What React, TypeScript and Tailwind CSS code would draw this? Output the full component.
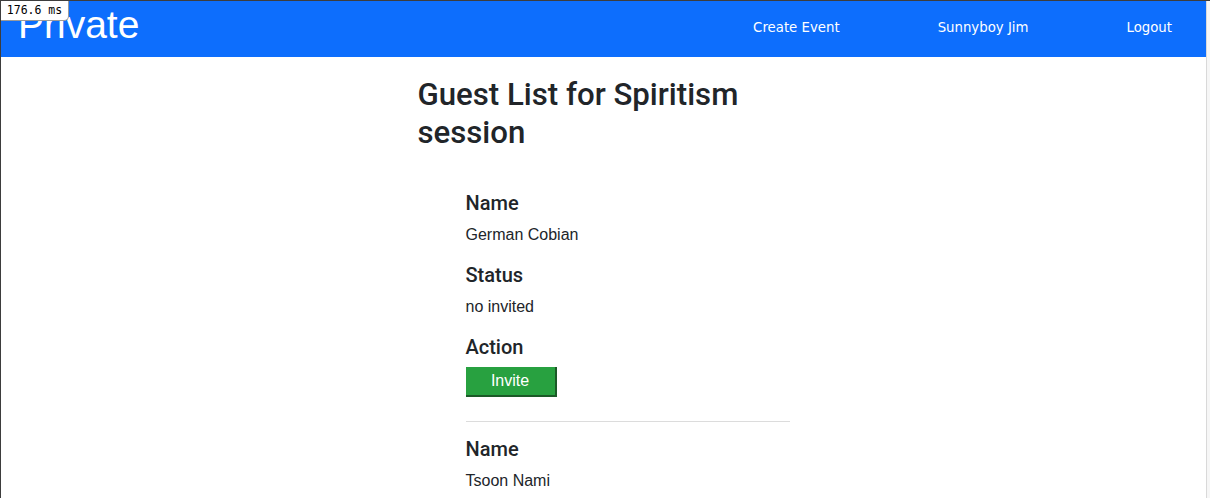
const guests = [
  { name: "German Cobian", status: "no invited" },
  { name: "Tsoon Nami", status: "no invited" },
];

function GuestItem({ name, status, last }: { name: string; status: string; last?: boolean }) {
  return (
    <div>
      <h5 className="text-[20px] leading-[24px] font-medium mb-2 font-['Roboto',sans-serif]">Name</h5>
      <p className="text-[16px] leading-[24px] mb-4">{name}</p>
      <h5 className="text-[20px] leading-[24px] font-medium mb-2 font-['Roboto',sans-serif]">Status</h5>
      <p className="text-[16px] leading-[24px] mb-4">{status}</p>
      <h5 className="text-[20px] leading-[24px] font-medium mb-2 font-['Roboto',sans-serif]">Action</h5>
      <button className="w-[91px] h-[30px] bg-[#28a140] text-white text-[16px] leading-none border-r-2 border-b-2 border-[#1b5a27]">
        Invite
      </button>
      {!last && <hr className="mt-[24px] mb-[15px] border-t border-[#dcdcdc]" />}
    </div>
  );
}

export default function App() {
  return (
    <div className="relative flex h-[498px] overflow-hidden bg-white border-t border-l border-[#3d3d3d] text-[#212529] font-['Liberation_Sans',sans-serif]">
      <div className="absolute top-0 left-0 z-10 w-[68px] h-[20px] bg-white border-r border-b border-[#9a9a9a] rounded-br-[5px] flex items-center justify-center font-['DejaVu_Sans_Mono',monospace] text-[11.5px] text-black">
        176.6 ms
      </div>

      <div className="flex-1 flex flex-col min-w-0">
        <nav className="shrink-0 h-[56px] bg-[#0d6efd] flex items-center">
          <span className="ml-[17px] text-[39px] leading-none text-white font-['Liberation_Sans',sans-serif] mb-[10px]">
            Private
          </span>
          <div className="ml-auto mb-[2px] flex items-center text-white text-[13.3px] font-['DejaVu_Sans',sans-serif]">
            <a className="mr-[98px]">Create Event</a>
            <a className="mr-[98px]">Sunnyboy Jim</a>
            <a className="mr-[34px]">Logout</a>
          </div>
        </nav>

        <main className="shrink-0 mx-auto w-[372px] pt-[19px]">
          <h1 className="text-[31.2px] leading-[38px] font-medium mb-[39px] font-['Roboto',sans-serif]">
            Guest List for Spiritism session
          </h1>
          <div className="pl-[48px]">
            {guests.map((g, i) => (
              <GuestItem key={i} name={g.name} status={g.status} last={i === guests.length - 1} />
            ))}
          </div>
        </main>
      </div>

      <div className="shrink-0 w-[4px] border-l border-[#d9d9d9] bg-[#f6f6f6]" />
    </div>
  );
}
